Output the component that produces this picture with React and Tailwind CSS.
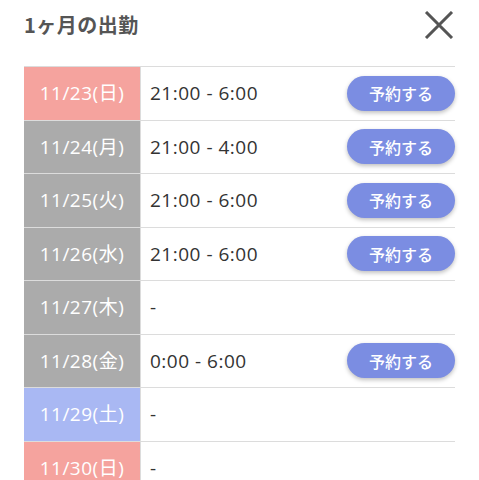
const rows = [
  { date: "11/23(日)", time: "21:00 - 6:00", kind: "sun", reserve: true },
  { date: "11/24(月)", time: "21:00 - 4:00", kind: "day", reserve: true },
  { date: "11/25(火)", time: "21:00 - 6:00", kind: "day", reserve: true },
  { date: "11/26(水)", time: "21:00 - 6:00", kind: "day", reserve: true },
  { date: "11/27(木)", time: "-", kind: "day", reserve: false },
  { date: "11/28(金)", time: "0:00 - 6:00", kind: "day", reserve: true },
  { date: "11/29(土)", time: "-", kind: "sat", reserve: false },
  { date: "11/30(日)", time: "-", kind: "sun", reserve: false },
];

const dateBg = {
  sun: "bg-[#f5a39e]",
  sat: "bg-[#a9b8f3]",
  day: "bg-[#ababab]",
};

export default function App() {
  return (
    <div
      className="w-[479px] h-[480px] overflow-hidden bg-white px-6"
      style={{ fontFamily: '"Open Sans", "Noto Sans CJK JP", sans-serif' }}
    >
      <div className="flex items-center justify-between h-[50px]">
        <h2
          className="text-[20px] font-bold text-[#555555] tracking-wide"
          style={{ fontFamily: '"Noto Sans CJK JP", sans-serif' }}
        >
          1ヶ月の出勤
        </h2>
        <button type="button" className="w-8 h-8 flex items-center justify-center">
          <svg width="30" height="28" viewBox="0 0 30 28" fill="none">
            <path d="M2 1 L28 27 M28 1 L2 27" stroke="#555555" strokeWidth="3" />
          </svg>
        </button>
      </div>
      <div className="mt-4 border-t border-[#dcdcdc]">
        {rows.map((r) => (
          <div key={r.date} className="flex h-[53.5px] border-b border-[#dcdcdc]">
            <div
              className={`w-[116px] shrink-0 flex items-center justify-center text-white text-[19px] tracking-[0.5px] ${dateBg[r.kind]}`}
            >
              {r.date}
            </div>
            <div className="flex-1 flex items-center justify-between border-l border-[#dcdcdc] pl-[9px]">
              <span className="text-[19px] tracking-[0.5px] text-[#333333]">{r.time}</span>
              {r.reserve && (
                <button
                  type="button"
                  className="w-[108px] h-[35px] rounded-full bg-[#7b8de2] text-white text-[16px] font-medium shadow-[0_2px_4px_rgba(0,0,0,0.25)]"
                  style={{ fontFamily: '"Noto Sans CJK JP", sans-serif' }}
                >
                  予約する
                </button>
              )}
            </div>
          </div>
        ))}
      </div>
    </div>
  );
}
